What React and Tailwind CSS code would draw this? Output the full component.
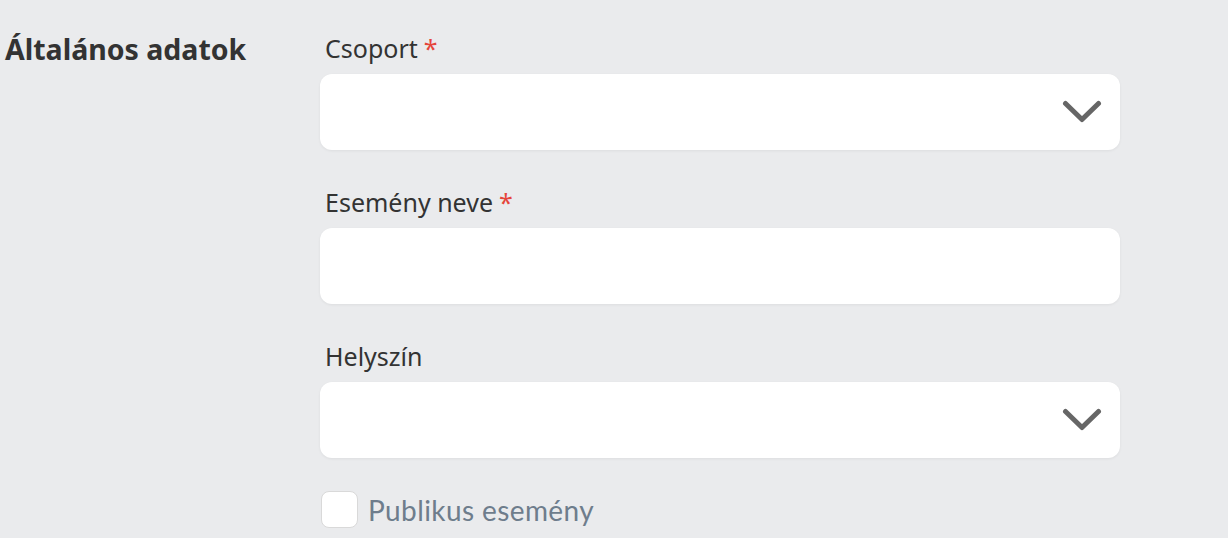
import React from "react";

const Chevron = () => (
  <svg width="40" height="24" viewBox="0 0 40 24" fill="none">
    <path
      d="M3.5 3.5 L20 19.5 L36.5 3.5"
      stroke="#666666"
      strokeWidth="5"
      strokeLinecap="round"
      strokeLinejoin="round"
    />
  </svg>
);

const Field = ({ label, required, select, className }) => (
  <div className={className}>
    <div className="h-8 pl-[5px] text-[25px] leading-8 text-[#333333]">
      {label}
      {required && <span className="ml-[6px] text-[#e5453b]">*</span>}
    </div>
    <div className="mt-[10px] flex h-[76px] items-center justify-end rounded-xl bg-white pr-[18px] shadow-[0_1px_3px_rgba(0,0,0,0.06)]">
      {select && <Chevron />}
    </div>
  </div>
);

export default function App() {
  return (
    <div className="min-h-[538px] w-full bg-[#eaebed] font-['Noto_Sans',sans-serif]">
      <div className="flex">
        <div className="w-[320px] shrink-0 pl-[5px] pt-[29px]">
          <h2 className="text-[28.5px] font-bold leading-10 text-[#333333]">Általános adatok</h2>
        </div>
        <div className="w-[800px] pt-[32px]">
          <Field label="Csoport" required select />
          <Field label="Esemény neve" required className="mt-[36px]" />
          <Field label="Helyszín" select className="mt-[36px]" />
          <label className="mt-[33px] flex items-center gap-[10px] pl-[1px]">
            <span className="h-[37px] w-[37px] rounded-lg border border-[#d9d9d9] bg-white" />
            <span className="font-['Lato',sans-serif] text-[28px] leading-9 tracking-[0.4px] text-[#6e7d8c]">
              Publikus esemény
            </span>
          </label>
        </div>
      </div>
    </div>
  );
}
